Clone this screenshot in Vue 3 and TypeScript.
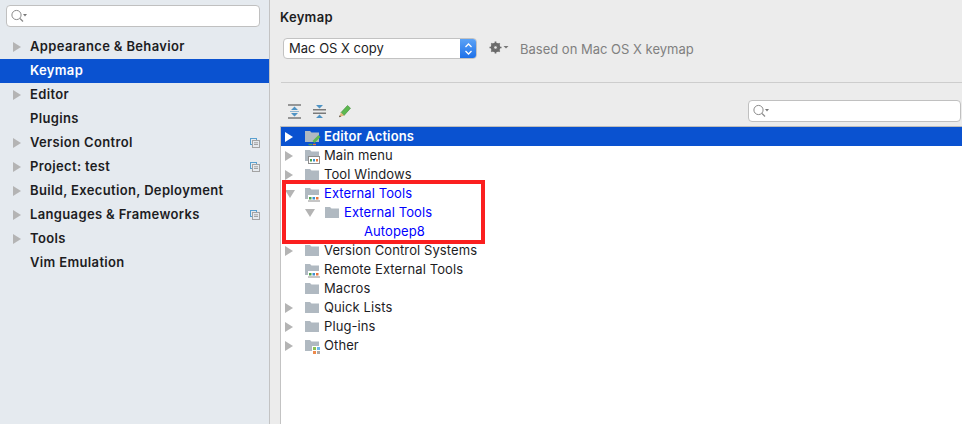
<script setup lang="ts">
interface NavItem { label: string; arrow: boolean; active?: boolean; copy?: boolean }
interface TreeRow { label: string; arrow?: 'right' | 'down'; depth: number; icon?: 'folder' | 'box' | 'dots' | 'other' | 'edit'; active?: boolean; changed?: boolean }

const nav: NavItem[] = [
  { label: 'Appearance & Behavior', arrow: true },
  { label: 'Keymap', arrow: false, active: true },
  { label: 'Editor', arrow: true },
  { label: 'Plugins', arrow: false },
  { label: 'Version Control', arrow: true, copy: true },
  { label: 'Project: test', arrow: true, copy: true },
  { label: 'Build, Execution, Deployment', arrow: true },
  { label: 'Languages & Frameworks', arrow: true, copy: true },
  { label: 'Tools', arrow: true },
  { label: 'Vim Emulation', arrow: false },
]

const rows: TreeRow[] = [
  { label: 'Editor Actions', arrow: 'right', depth: 0, icon: 'edit', active: true },
  { label: 'Main menu', arrow: 'right', depth: 0, icon: 'box' },
  { label: 'Tool Windows', arrow: 'right', depth: 0, icon: 'folder' },
  { label: 'External Tools', arrow: 'down', depth: 0, icon: 'dots', changed: true },
  { label: 'External Tools', arrow: 'down', depth: 1, icon: 'folder', changed: true },
  { label: 'Autopep8', depth: 2, changed: true },
  { label: 'Version Control Systems', arrow: 'right', depth: 0, icon: 'folder' },
  { label: 'Remote External Tools', depth: 0, icon: 'dots' },
  { label: 'Macros', depth: 0, icon: 'folder' },
  { label: 'Quick Lists', arrow: 'right', depth: 0, icon: 'folder' },
  { label: 'Plug-ins', arrow: 'right', depth: 0, icon: 'folder' },
  { label: 'Other', arrow: 'right', depth: 0, icon: 'other' },
]

const folder = 'M1 4h5l1.5 1.5H15V15H1z'
</script>

<template>
  <div class="window">
    <aside class="sidebar">
      <div class="search side-search">
        <svg width="20" height="16" viewBox="0 0 20 16" class="lens">
          <circle cx="6.5" cy="7" r="4.6" fill="none" stroke="#8a8a8a" stroke-width="1" />
          <path d="M10 10.5l3 3" stroke="#8a8a8a" stroke-width="1.2" />
          <path d="M13 6h4l-2 2.5z" fill="#777" />
        </svg>
      </div>
      <ul class="nav">
        <li v-for="item in nav" :key="item.label" class="nav-row" :class="{ active: item.active }">
          <span v-if="item.arrow" class="tri nav-tri"></span>
          <span class="nav-label">{{ item.label }}</span>
          <svg v-if="item.copy" class="copy" width="10" height="10" viewBox="0 0 10 10">
            <rect x="0.5" y="0.5" width="6" height="6" fill="none" stroke="#5aa0cf" />
            <rect x="2.5" y="2.5" width="7" height="7" fill="#e5eaef" stroke="#a3a3a3" />
            <path d="M4 4.8h4M4 6.5h4" stroke="#a3a3a3" />
          </svg>
        </li>
      </ul>
    </aside>

    <main class="content">
      <h1 class="title">Keymap</h1>
      <div class="scheme">
        <div class="select">
          <span class="select-text">Mac OS X copy</span>
          <span class="stepper">
            <svg width="9" height="14" viewBox="0 0 9 14">
              <path d="M1.5 5L4.5 2l3 3M1.5 9l3 3 3-3" fill="none" stroke="#fff" stroke-width="1.3" />
            </svg>
          </span>
        </div>
        <svg class="gear" width="20" height="14" viewBox="0 0 20 14">
          <circle cx="6.5" cy="6.5" r="3.6" fill="none" stroke="#6b6b6b" stroke-width="2.4" />
          <path d="M6.5 0.5v12M0.5 6.5h12M2.3 2.3l8.4 8.4M10.7 2.3l-8.4 8.4" stroke="#6b6b6b" stroke-width="1.7" />
          <circle cx="6.5" cy="6.5" r="1.3" fill="#ececec" />
          <path d="M14.5 5h5L17 7.5z" fill="#777" />
        </svg>
        <span class="based">Based on Mac OS X keymap</span>
      </div>
      <div class="rule"></div>
      <div class="toolbar">
        <div class="tools">
          <svg width="13" height="15" viewBox="0 0 13 15">
            <path d="M0 1h13M0 14h13" stroke="#7a7a7a" stroke-width="1.6" />
            <path d="M6.5 2.5L10 6H3zM6.5 12.5L3 9h7z" fill="#4f93c4" />
            <path d="M2 7.5h9" stroke="#8fb6d2" />
          </svg>
          <svg width="13" height="15" viewBox="0 0 13 15">
            <path d="M0 5.8h13M0 9.2h13" stroke="#7a7a7a" stroke-width="1.4" />
            <path d="M6.5 4.5L3 1h7zM6.5 10.5L10 14H3z" fill="#4f93c4" />
          </svg>
          <svg width="13" height="14" viewBox="0 0 13 14">
            <path d="M3 8.5L9.5 1.5l3 2.7L6 11.5z" fill="#5cb84f" stroke="#3f8c37" stroke-width=".6" />
            <path d="M3 8.5l3 3L1 13.3z" fill="#e3b57a" />
            <path d="M1 13.3l.8-2 1.3 1.2z" fill="#444" />
          </svg>
        </div>
        <div class="search tree-search">
          <svg width="20" height="16" viewBox="0 0 20 16" class="lens">
            <circle cx="6.5" cy="7" r="4.6" fill="none" stroke="#8a8a8a" stroke-width="1" />
            <path d="M10 10.5l3 3" stroke="#8a8a8a" stroke-width="1.2" />
            <path d="M13 6h4l-2 2.5z" fill="#777" />
          </svg>
        </div>
      </div>

      <div class="tree">
        <div
          v-for="(row, i) in rows"
          :key="i"
          class="tree-row"
          :class="{ selected: row.active, changed: row.changed, [`depth-${row.depth}`]: true }"
        >
          <span class="slot-arrow">
            <span v-if="row.arrow === 'right'" class="tri"></span>
            <span v-else-if="row.arrow === 'down'" class="tri-down"></span>
          </span>
          <span class="slot-icon">
            <svg v-if="row.icon" width="20" height="19" viewBox="0 0 20 19">
              <path :d="folder" fill="#b0b9c1" />
              <template v-if="row.icon === 'box'">
                <rect x="4.5" y="10.5" width="11" height="7" fill="#fff" stroke="#8d8d8d" />
                <rect x="6" y="13" width="2" height="2.5" fill="#4ea34a" />
                <rect x="9" y="13" width="2" height="2.5" fill="#3f8fd0" />
                <rect x="12" y="13" width="2" height="2.5" fill="#e8743b" />
              </template>
              <template v-if="row.icon === 'dots'">
                <rect x="4" y="11" width="12" height="7" fill="#fff" />
                <rect x="5" y="13" width="2.5" height="2.5" fill="#4ea34a" />
                <rect x="8.5" y="13" width="2.5" height="2.5" fill="#3f8fd0" />
                <rect x="12" y="13" width="2.5" height="2.5" fill="#e8743b" />
                <path d="M4 17h12" stroke="#8d8d8d" />
              </template>
              <template v-if="row.icon === 'other'">
                <rect x="8" y="10" width="9" height="9" fill="#fff" />
                <rect x="9" y="11" width="3" height="3" fill="#8cc152" />
                <rect x="13" y="11" width="3" height="3" fill="#6db8e8" />
                <rect x="9" y="15" width="3" height="3" fill="#ee8a4b" />
                <rect x="13" y="15" width="3" height="3" fill="#aaa" />
              </template>
              <template v-if="row.icon === 'edit'">
                <path d="M8.5 14l6-6 2 2-6 6z" fill="#5cb84f" />
                <path d="M4.5 17.5h4" stroke="#4ea34a" stroke-width="1.4" />
                <path d="M9 17.5h3" stroke="#e8743b" stroke-width="1.4" />
              </template>
            </svg>
          </span>
          <span class="tree-label">{{ row.label }}</span>
        </div>
      </div>
      <div class="highlight"></div>
    </main>
  </div>
</template>

<style scoped>
.window {
  display: flex;
  width: 962px;
  height: 424px;
  overflow: hidden;
  font-family: Inter, "Liberation Sans", sans-serif;
  font-size: 13px;
  color: #1d1d1f;
  background: #ececec;
}
.sidebar {
  width: 270px;
  flex: none;
  box-sizing: border-box;
  border-right: 1.5px solid #c3c3c3;
  background: #e5eaef;
  padding-top: 5px;
}
.search {
  box-sizing: border-box;
  height: 22px;
  background: #fff;
  border: 1px solid #c0c0c0;
  border-radius: 4px;
  display: flex;
  align-items: center;
  padding-left: 3px;
}
.side-search { width: 254px; margin-left: 6px; }
.nav { list-style: none; margin: 8px 0 0; padding: 0; }
.nav-row {
  height: 24px;
  display: flex;
  align-items: center;
  position: relative;
  padding-left: 30px;
  font-weight: 600;
  letter-spacing: .35px;
}
.nav-label { margin-top: -2px; }
.nav-row.active { background: #0a52d0; color: #fff; }
.nav-tri { position: absolute; left: 13px; top: 7px; }
.copy { position: absolute; left: 250px; top: 7px; }
.tri {
  display: block;
  width: 0;
  height: 0;
  border-left: 8px solid #b4b4b4;
  border-top: 5px solid transparent;
  border-bottom: 5px solid transparent;
}
.tri-down {
  display: block;
  width: 0;
  height: 0;
  border-top: 8px solid #b4b4b4;
  border-left: 5px solid transparent;
  border-right: 5px solid transparent;
}
.content {
  flex: 1;
  min-width: 0;
  position: relative;
  display: flex;
  flex-direction: column;
}
.title {
  margin: 9px 0 0 10px;
  font-size: 13px;
  line-height: 16px;
  font-weight: 600;
  letter-spacing: .3px;
}
.scheme {
  display: flex;
  align-items: center;
  margin: 13px 0 0 13px;
  height: 21px;
}
.select {
  width: 194px;
  height: 21px;
  box-sizing: border-box;
  display: flex;
  align-items: center;
  justify-content: space-between;
  background: #fff;
  border: 1px solid #c2c2c2;
  border-radius: 4px;
  overflow: hidden;
  padding-left: 5px;
  font-size: 13px;
}
.select-text { margin-top: -1px; }
.stepper {
  width: 17px;
  align-self: stretch;
  margin: -1px -1px -1px 0;
  background: linear-gradient(#5fa5f7, #1a6ee8);
  display: flex;
  align-items: center;
  justify-content: center;
}
.gear { margin: -2px 0 0 12px; }
.based { margin-left: 11px; color: #808080; font-size: 13px; }
.rule {
  height: 1px;
  background: #cdcdcd;
  margin: 23px 0 0 11px;
}
.toolbar {
  display: flex;
  align-items: center;
  justify-content: space-between;
  height: 43px;
  box-sizing: border-box;
  padding: 13px 1px 0 18px;
}
.tools { display: flex; align-items: center; gap: 12px; }
.tree-search { width: 213px; }
.tree {
  flex: 1;
  margin-left: 10px;
  background: #fff;
  border-left: 1px solid #c3c3c3;
  border-top: 1px solid #bdbdbd;
}
.tree-row {
  height: 19px;
  display: flex;
  align-items: center;
  color: #1d1d1f;
  letter-spacing: .1px;
}
.tree-row.selected { background: #0a52d0; color: #fff; font-weight: 600; letter-spacing: .15px; }
.tree-row.selected .tri { border-left-color: #fff; }
.tree-row.changed { color: #0000ff; }
.depth-1 { padding-left: 20px; }
.depth-2 { padding-left: 40px; }
.slot-arrow { width: 23px; padding-left: 4px; box-sizing: border-box; flex: none; }
.slot-icon { width: 20px; height: 19px; flex: none; }
.tree-label { white-space: nowrap; margin-top: -2px; }
.highlight {
  position: absolute;
  left: 12px;
  top: 180px;
  width: 203px;
  height: 64px;
  box-sizing: border-box;
  border: 4px solid #fb1f1f;
  pointer-events: none;
}
</style>

<style>
html, body { margin: 0; padding: 0; }
</style>
